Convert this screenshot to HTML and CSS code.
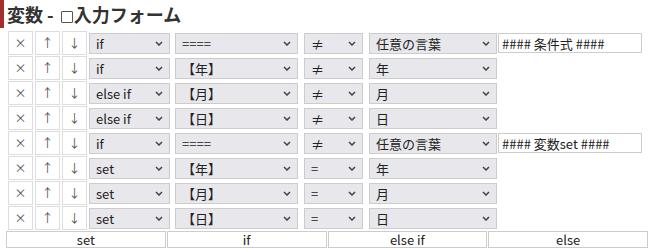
FILE: index.html
```html
<!DOCTYPE html>
<html lang="ja">
<head>
  <meta charset="UTF-8" />
  <title>変数 - 入力フォーム</title>
  <link rel="stylesheet" href="styles.css">
</head>
<body>
<h1 class="titulo">変数 - <i class="caixa"></i>入力フォーム</h1>

<div class="linhas" id="linhas"></div>

<div class="botoes">
  <button>set</button>
  <button>if</button>
  <button>else if</button>
  <button>else</button>
</div>

<script>
  const linhas = [
    { tipo: "if", alvo: "====", op: "≠", valor: "任意の言葉", texto: "#### 条件式 ####" },
    { tipo: "if", alvo: "【年】", op: "≠", valor: "年" },
    { tipo: "else if", alvo: "【月】", op: "≠", valor: "月" },
    { tipo: "else if", alvo: "【日】", op: "≠", valor: "日" },
    { tipo: "if", alvo: "====", op: "≠", valor: "任意の言葉", texto: "#### 変数set ####" },
    { tipo: "set", alvo: "【年】", op: "=", valor: "年" },
    { tipo: "set", alvo: "【月】", op: "=", valor: "月" },
    { tipo: "set", alvo: "【日】", op: "=", valor: "日" }
  ];

  const seta = `<svg width="8" height="5" viewBox="0 0 8 5"><path d="M1 1 L4 4 L7 1" fill="none" stroke="#444" stroke-width="1.5"/></svg>`;

  function sel(classe, texto) {
    return `<div class='sel ${classe}'><span>${texto}</span>${seta}</div>`;
  }

  let html = '';
  linhas.forEach(l => {
    html += `<div class='linha'>
      <div class='cel'>×</div><div class='cel'>↑</div><div class='cel'>↓</div>
      ${sel('s1', l.tipo)}${sel('s2', l.alvo)}${sel('s3', l.op)}${sel('s4', l.valor)}
      ${l.texto ? `<input class='texto' value='${l.texto}'>` : ''}
    </div>`;
  });
  document.getElementById('linhas').innerHTML = html;
</script>
</body>
</html>
```

FILE: styles.css
```css
body {
  font-family: "Noto Sans CJK JP", "Noto Sans", sans-serif;
  font-size: 13px;
  color: #222;
  background: #fff;
  margin: 0;
  padding: 0;
}
.titulo {
  margin: 0;
  height: 28px;
  border-left: 4px solid #a0302c;
  padding-left: 3px;
  font-size: 18px;
  font-weight: bold;
  color: #333;
  line-height: 28px;
}
.caixa {
  display: inline-block;
  width: 10px;
  height: 10px;
  border: 1.5px solid #555;
  border-radius: 1px;
  margin: 0 1px 0 3px;
  vertical-align: -1px;
}
.linhas {
  margin-top: 3px;
  padding-left: 8px;
}
.linha {
  display: flex;
  align-items: center;
  height: 24px;
  margin-bottom: 1px;
}
.cel {
  width: 23px;
  height: 22px;
  border: 1px solid #ddd;
  margin-right: 2px;
  text-align: center;
  line-height: 22px;
  color: #555;
  font-size: 12px;
  flex-shrink: 0;
}
.sel {
  display: flex;
  align-items: center;
  justify-content: space-between;
  height: 21px;
  border: 1px solid #ccc;
  background: #e8e8ec;
  padding: 0 6px 0 6px;
  box-sizing: border-box;
  flex-shrink: 0;
}
.sel svg {
  flex-shrink: 0;
}
.s1 { width: 81px; margin-right: 5px; }
.s2 { width: 123px; margin-right: 6px; }
.s3 { width: 59px; margin-right: 6px; }
.s4 { width: 128px; margin-right: 1px; }
.texto {
  width: 144px;
  height: 20px;
  box-sizing: border-box;
  border: 1px solid #ccc;
  padding: 0 3px;
  font-family: inherit;
  font-size: 13px;
  color: #222;
  outline: none;
}
.botoes {
  display: flex;
  gap: 1px;
  padding-left: 6px;
}
.botoes button {
  flex: 1;
  height: 17px;
  background: #fff;
  border: 1px solid #ccc;
  font-family: inherit;
  font-size: 13px;
  color: #222;
  padding: 0;
  line-height: 15px;
}
```
